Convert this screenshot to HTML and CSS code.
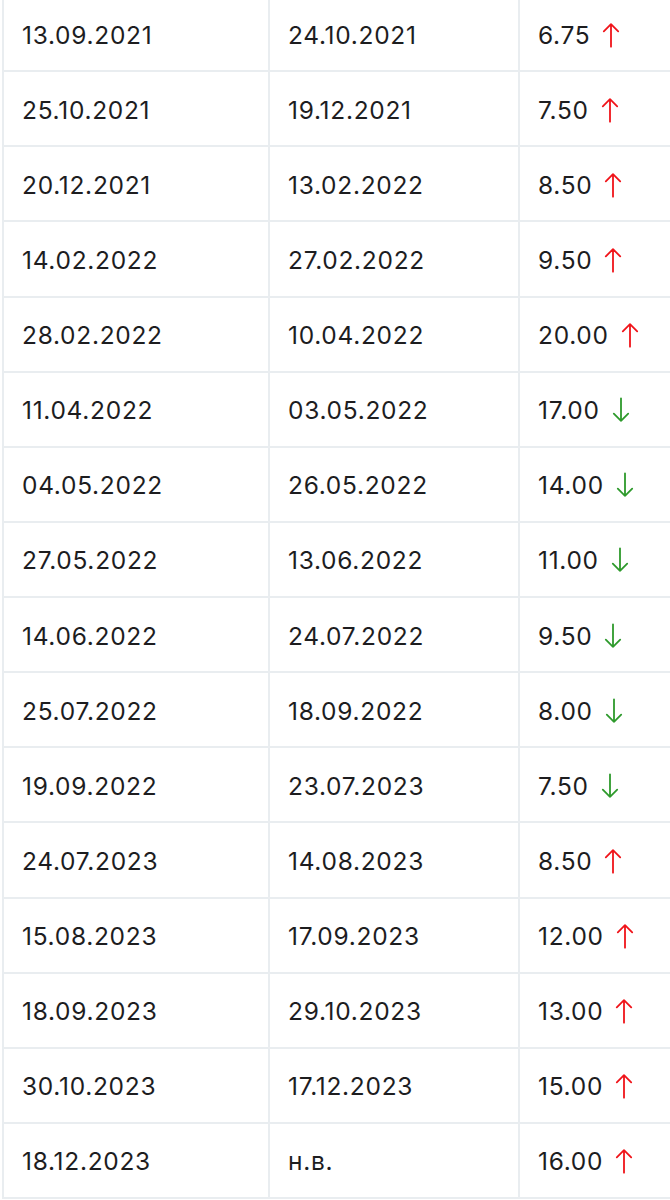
FILE: index.html
```html
<!DOCTYPE html>
<html lang="ru">
<head>
  <meta charset="UTF-8" />
  <meta name="viewport" content="width=device-width, initial-scale=1.0" />
  <title>Ключевая ставка</title>
  <link rel="stylesheet" href="styles.css">
</head>
<body>

  <!-- Rate history table -->
  <table class="rate-table">
    <colgroup>
      <col class="col-from">
      <col class="col-to">
      <col class="col-rate">
    </colgroup>
    <tbody>
      <tr><td>13.09.2021</td><td>24.10.2021</td><td><span class="rate">6.75<svg class="arrow up" viewBox="0 0 20 28"><path d="M10 27V2M2 10l8-8 8 8"/></svg></span></td></tr>
      <tr><td>25.10.2021</td><td>19.12.2021</td><td><span class="rate">7.50<svg class="arrow up" viewBox="0 0 20 28"><path d="M10 27V2M2 10l8-8 8 8"/></svg></span></td></tr>
      <tr><td>20.12.2021</td><td>13.02.2022</td><td><span class="rate">8.50<svg class="arrow up" viewBox="0 0 20 28"><path d="M10 27V2M2 10l8-8 8 8"/></svg></span></td></tr>
      <tr><td>14.02.2022</td><td>27.02.2022</td><td><span class="rate">9.50<svg class="arrow up" viewBox="0 0 20 28"><path d="M10 27V2M2 10l8-8 8 8"/></svg></span></td></tr>
      <tr><td>28.02.2022</td><td>10.04.2022</td><td><span class="rate">20.00<svg class="arrow up" viewBox="0 0 20 28"><path d="M10 27V2M2 10l8-8 8 8"/></svg></span></td></tr>
      <tr><td>11.04.2022</td><td>03.05.2022</td><td><span class="rate">17.00<svg class="arrow down" viewBox="0 0 20 28"><path d="M10 1v25M2 18l8 8 8-8"/></svg></span></td></tr>
      <tr><td>04.05.2022</td><td>26.05.2022</td><td><span class="rate">14.00<svg class="arrow down" viewBox="0 0 20 28"><path d="M10 1v25M2 18l8 8 8-8"/></svg></span></td></tr>
      <tr><td>27.05.2022</td><td>13.06.2022</td><td><span class="rate">11.00<svg class="arrow down" viewBox="0 0 20 28"><path d="M10 1v25M2 18l8 8 8-8"/></svg></span></td></tr>
      <tr><td>14.06.2022</td><td>24.07.2022</td><td><span class="rate">9.50<svg class="arrow down" viewBox="0 0 20 28"><path d="M10 1v25M2 18l8 8 8-8"/></svg></span></td></tr>
      <tr><td>25.07.2022</td><td>18.09.2022</td><td><span class="rate">8.00<svg class="arrow down" viewBox="0 0 20 28"><path d="M10 1v25M2 18l8 8 8-8"/></svg></span></td></tr>
      <tr><td>19.09.2022</td><td>23.07.2023</td><td><span class="rate">7.50<svg class="arrow down" viewBox="0 0 20 28"><path d="M10 1v25M2 18l8 8 8-8"/></svg></span></td></tr>
      <tr><td>24.07.2023</td><td>14.08.2023</td><td><span class="rate">8.50<svg class="arrow up" viewBox="0 0 20 28"><path d="M10 27V2M2 10l8-8 8 8"/></svg></span></td></tr>
      <tr><td>15.08.2023</td><td>17.09.2023</td><td><span class="rate">12.00<svg class="arrow up" viewBox="0 0 20 28"><path d="M10 27V2M2 10l8-8 8 8"/></svg></span></td></tr>
      <tr><td>18.09.2023</td><td>29.10.2023</td><td><span class="rate">13.00<svg class="arrow up" viewBox="0 0 20 28"><path d="M10 27V2M2 10l8-8 8 8"/></svg></span></td></tr>
      <tr><td>30.10.2023</td><td>17.12.2023</td><td><span class="rate">15.00<svg class="arrow up" viewBox="0 0 20 28"><path d="M10 27V2M2 10l8-8 8 8"/></svg></span></td></tr>
      <tr><td>18.12.2023</td><td>н.в.</td><td><span class="rate">16.00<svg class="arrow up" viewBox="0 0 20 28"><path d="M10 27V2M2 10l8-8 8 8"/></svg></span></td></tr>
    </tbody>
  </table>

</body>
</html>
```

FILE: styles.css
```css
html, body {
  margin: 0;
  padding: 0;
  background-color: #fff;
  overflow: hidden;
}

body {
  font-family: Inter, "Noto Sans", sans-serif;
  color: #1d1d1f;
}

.rate-table {
  border-collapse: collapse;
  table-layout: fixed;
  width: 700px;
  margin: -5px 0 0 2px;
  font-size: 24.5px;
  letter-spacing: 0.7px;
}

.col-from { width: 266px; }
.col-to { width: 250px; }

.rate-table td {
  height: 71.13px;
  padding: 2px 0 0 18px;
  border: 2px solid #e9edf0;
  vertical-align: middle;
  white-space: nowrap;
}

.rate {
  display: inline-flex;
  align-items: center;
}

.arrow {
  width: 18px;
  height: 26px;
  margin-left: 12px;
  fill: none;
  stroke-width: 2;
  stroke-linecap: round;
  stroke-linejoin: round;
}

.arrow.up {
  stroke: #f0141a;
}

.arrow.down {
  stroke: #2e9a2c;
}
```
